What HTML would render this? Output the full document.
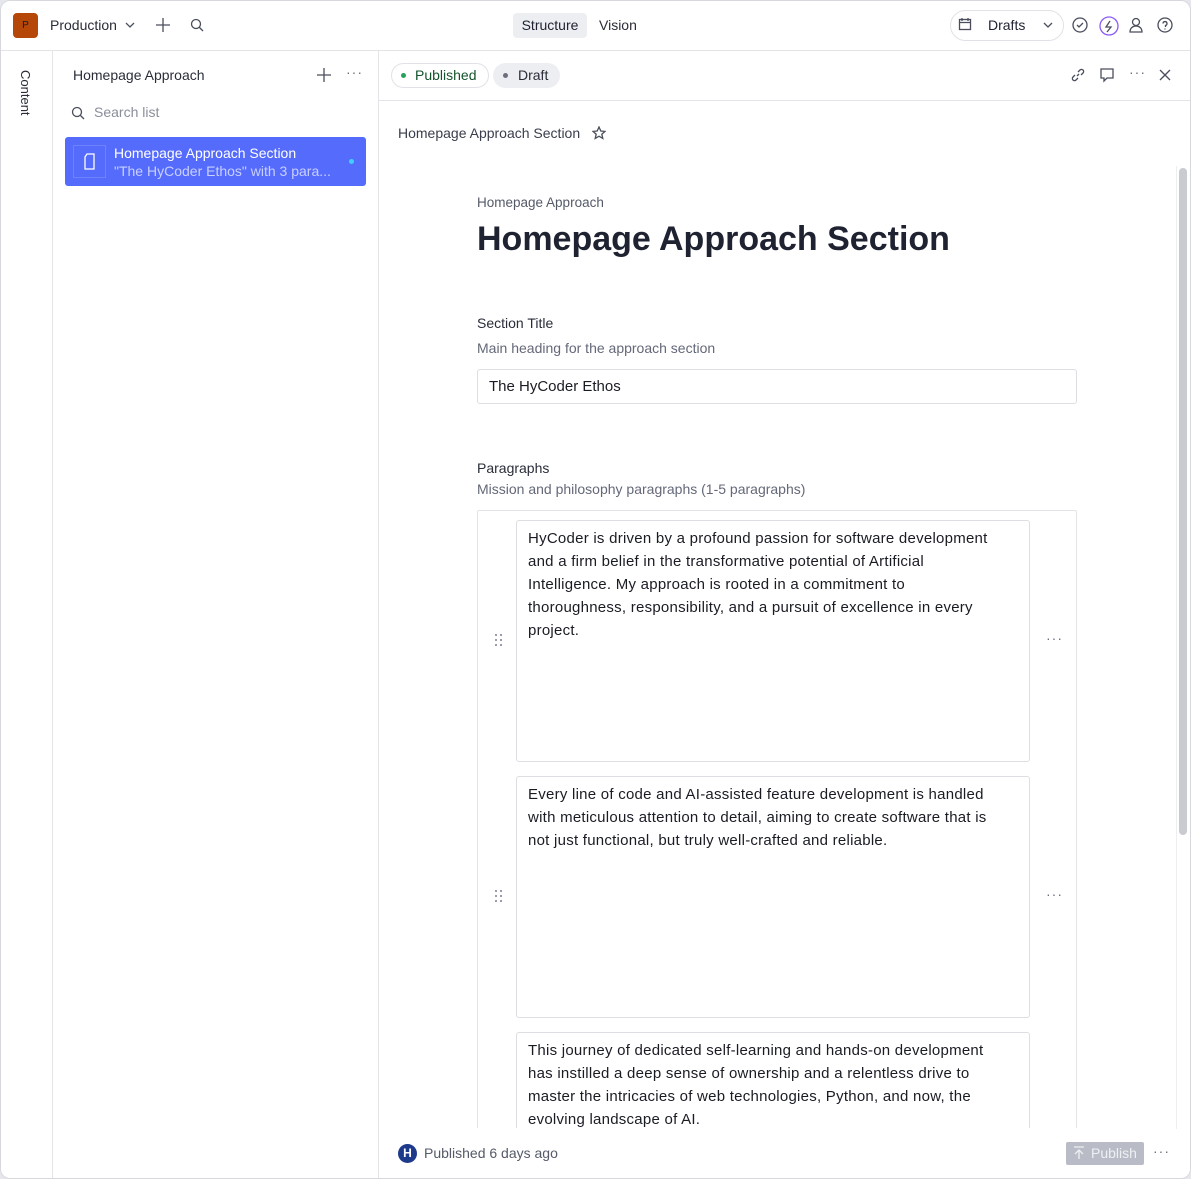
<!DOCTYPE html>
<html><head><style>
*{box-sizing:border-box;margin:0;padding:0}
body{width:1191px;height:1179px;background:#e6e7ec;font-family:"Liberation Sans",sans-serif;position:relative;overflow:hidden;color:#1f2230}
.win{position:absolute;left:0;top:0;width:1191px;height:1179px;background:#fff;border-radius:10px;overflow:hidden}
.frame{position:absolute;left:0;top:0;width:1191px;height:1179px;border:1px solid #d6d8de;border-radius:10px;pointer-events:none}
.a{position:absolute;white-space:nowrap}
.ic{position:absolute;stroke:#4a4e5c;fill:none;stroke-width:1.3}
.ta{position:absolute;left:516px;width:514px;border:1px solid #dcdee3;border-radius:3px;padding:6px 11px;font-size:15px;line-height:23px;color:#1a1c24;background:#fff;letter-spacing:0.25px;white-space:nowrap}
.drag{position:absolute;left:495px;width:8px;height:12px}
.drag i{position:absolute;width:2px;height:2px;background:#7b7f8c;border-radius:1px}
.dots{position:absolute;font-size:14px;color:#6b6f7c;letter-spacing:1px}
</style></head><body><div class="win">
<!-- top bar -->
<div class="a" style="left:13px;top:13px;width:25px;height:25px;background:#b54708;border-radius:4px;color:#1b1b1b;font-size:10px;text-align:center;line-height:25px">P</div>
<div class="a" style="left:50px;top:17px;font-size:14px;color:#2a2d38">Production</div>
<svg class="ic" style="left:124px;top:19px" width="12" height="12"><path d="M2 4l4 4 4-4"/></svg>
<svg class="ic" style="left:155px;top:17px" width="16" height="16"><path d="M8 1v14M1 8h14"/></svg>
<svg class="ic" style="left:190px;top:18px" width="14" height="14"><circle cx="6" cy="6" r="4.5"/><path d="M9.5 9.5l3.5 3.5"/></svg>
<div class="a" style="left:513px;top:13px;width:74px;height:25px;background:#eceef2;border-radius:4px;font-size:14px;text-align:center;line-height:25px;color:#1f2230">Structure</div>
<div class="a" style="left:599px;top:17px;font-size:14px;color:#2a2d38">Vision</div>
<div class="a" style="left:950px;top:10px;width:114px;height:31px;border:1px solid #e0e2e7;border-radius:16px"></div>
<svg class="ic" style="left:958px;top:17px" width="14" height="14"><rect x="1.5" y="2.5" width="11" height="10"/><path d="M1.5 5.5h11M4 1v3M10 1v3"/></svg>
<div class="a" style="left:988px;top:17px;font-size:14px;color:#1f2230">Drafts</div>
<svg class="ic" style="left:1042px;top:19px" width="12" height="12"><path d="M2 4l4 4 4-4"/></svg>
<svg class="ic" style="left:1072px;top:17px" width="16" height="16"><circle cx="8" cy="8" r="7"/><path d="M5 8l2 2 4-4"/></svg>
<svg class="ic" style="left:1099px;top:16px;stroke:#8b5cf6" width="20" height="20"><circle cx="10" cy="10" r="9"/><path d="M11 5l-4 6h5l-4 5" stroke="#4a4e5c"/></svg>
<svg class="ic" style="left:1128px;top:16px" width="18" height="18"><circle cx="8" cy="6" r="3.5"/><path d="M2 16c0-4 3-6 6-6s6 2 6 6z"/></svg>
<svg class="ic" style="left:1157px;top:17px" width="16" height="16"><circle cx="8" cy="8" r="7"/><path d="M6 6.5a2 2 0 1 1 2.5 2v1.5M8 11.5v1"/></svg>
<div class="a" style="left:0;top:50px;width:1191px;height:1px;background:#e2e4e8"></div>
<!-- left strip -->
<div class="a" style="left:52px;top:51px;width:1px;height:1128px;background:#e2e4e8"></div>
<div class="a" style="left:18px;top:70px;font-size:13px;color:#2a2d38;writing-mode:vertical-rl">Content</div>
<!-- list pane -->
<div class="a" style="left:378px;top:51px;width:1px;height:1128px;background:#e2e4e8"></div>
<div class="a" style="left:73px;top:67px;font-size:14px;color:#2a2d38">Homepage Approach</div>
<svg class="ic" style="left:317px;top:68px" width="14" height="14"><path d="M7 0v14M0 7h14"/></svg>
<div class="dots" style="left:346px;top:64px">···</div>
<svg class="ic" style="left:71px;top:106px" width="14" height="14"><circle cx="6" cy="6" r="4.5"/><path d="M9.5 9.5l3.5 3.5"/></svg>
<div class="a" style="left:94px;top:104px;font-size:14px;color:#8a8e9a">Search list</div>
<div class="a" style="left:65px;top:137px;width:301px;height:49px;background:#556bfc;border-radius:3px"></div>
<div class="a" style="left:73px;top:145px;width:33px;height:33px;border:1px solid #6f82fd"></div>
<svg class="ic" style="left:83px;top:153px;stroke:#fff" width="13" height="17"><path d="M4 1h7v15H2V4z"/></svg>
<div class="a" style="left:114px;top:145px;font-size:14px;color:#fff">Homepage Approach Section</div>
<div class="a" style="left:114px;top:163px;font-size:14px;color:#c8d0ff">"The HyCoder Ethos" with 3 para...</div>
<div class="a" style="left:349px;top:159px;width:5px;height:5px;border-radius:50%;background:#3fd0ff"></div>
<!-- doc header -->
<div class="a" style="left:391px;top:63px;width:98px;height:25px;border:1px solid #e0e2e7;border-radius:13px"></div>
<div class="a" style="left:401px;top:73px;width:5px;height:5px;border-radius:50%;background:#22a55a"></div>
<div class="a" style="left:415px;top:67px;font-size:14px;color:#14532d">Published</div>
<div class="a" style="left:493px;top:63px;width:67px;height:25px;background:#eceef2;border-radius:13px"></div>
<div class="a" style="left:503px;top:73px;width:5px;height:5px;border-radius:50%;background:#6b6f7c"></div>
<div class="a" style="left:518px;top:67px;font-size:14px;color:#2a2d38">Draft</div>
<svg class="ic" style="left:1071px;top:68px" width="14" height="14"><path d="M6 8l2-2M4 7l-2 2a2 2 0 0 0 3 3l2-2M10 7l2-2a2 2 0 0 0-3-3L7 4"/></svg>
<svg class="ic" style="left:1099px;top:67px" width="16" height="16"><path d="M2 2h12v9H8l-3 3v-3H2z"/></svg>
<div class="dots" style="left:1129px;top:64px">···</div>
<svg class="ic" style="left:1159px;top:69px" width="12" height="12"><path d="M1 1l10 10M11 1L1 11"/></svg>
<div class="a" style="left:379px;top:100px;width:812px;height:1px;background:#e2e4e8"></div>
<div class="a" style="left:398px;top:125px;font-size:14px;color:#3a3e4c">Homepage Approach Section</div>
<svg class="ic" style="left:592px;top:126px" width="14" height="14"><path d="M7 1l1.8 4 4.2.4-3.2 2.8 1 4.2L7 10.2 3.2 12.4l1-4.2L1 5.4l4.2-.4z"/></svg>
<!-- scrollbar -->
<div class="a" style="left:1176px;top:166px;width:14px;height:963px;border-left:1px solid #eceef0"></div>
<div class="a" style="left:1179px;top:168px;width:8px;height:667px;background:#c9cbd0;border-radius:4px"></div>
<!-- form -->
<div class="a" style="left:477px;top:195px;font-size:13.5px;color:#555a68">Homepage Approach</div>
<div class="a" style="left:477px;top:220px;font-size:34px;font-weight:bold;color:#1f2230">Homepage Approach Section</div>
<div class="a" style="left:477px;top:315px;font-size:14px;color:#2a2d38">Section Title</div>
<div class="a" style="left:477px;top:340px;font-size:14px;color:#646878">Main heading for the approach section</div>
<div class="a" style="left:477px;top:369px;width:600px;height:35px;border:1px solid #dcdee3;border-radius:3px;padding:8px 11px;font-size:15px;color:#1a1c24">The HyCoder Ethos</div>
<div class="a" style="left:477px;top:460px;font-size:14px;color:#2a2d38">Paragraphs</div>
<div class="a" style="left:477px;top:481px;font-size:14px;color:#646878">Mission and philosophy paragraphs (1-5 paragraphs)</div>
<div class="a" style="left:477px;top:510px;width:600px;height:640px;border:1px solid #e2e4e8;border-radius:2px"></div>
<div class="ta" style="top:520px;height:242px">HyCoder is driven by a profound passion for software development<br>and a firm belief in the transformative potential of Artificial<br>Intelligence. My approach is rooted in a commitment to<br>thoroughness, responsibility, and a pursuit of excellence in every<br>project.</div>
<div class="ta" style="top:776px;height:242px">Every line of code and AI-assisted feature development is handled<br>with meticulous attention to detail, aiming to create software that is<br>not just functional, but truly well-crafted and reliable.</div>
<div class="ta" style="top:1032px;height:140px">This journey of dedicated self-learning and hands-on development<br>has instilled a deep sense of ownership and a relentless drive to<br>master the intricacies of web technologies, Python, and now, the<br>evolving landscape of AI.</div>
<div class="drag" style="top:634px"><i style="left:0;top:0"></i><i style="left:5px;top:0"></i><i style="left:0;top:5px"></i><i style="left:5px;top:5px"></i><i style="left:0;top:10px"></i><i style="left:5px;top:10px"></i></div>
<div class="drag" style="top:890px"><i style="left:0;top:0"></i><i style="left:5px;top:0"></i><i style="left:0;top:5px"></i><i style="left:5px;top:5px"></i><i style="left:0;top:10px"></i><i style="left:5px;top:10px"></i></div>
<div class="dots" style="left:1046px;top:630px">···</div>
<div class="dots" style="left:1046px;top:886px">···</div>
<!-- footer -->
<div class="a" style="left:379px;top:1128px;width:797px;height:51px;background:#fff"></div>
<div class="a" style="left:398px;top:1144px;width:19px;height:19px;border-radius:50%;background:#1e3a8a;color:#fff;font-size:12px;font-weight:bold;text-align:center;line-height:19px">H</div>
<div class="a" style="left:424px;top:1145px;font-size:14px;color:#555a68">Published 6 days ago</div>
<div class="a" style="left:1066px;top:1142px;width:78px;height:23px;background:#b9bcc6;border-radius:2px;color:#eef0f4;font-size:14px;line-height:23px;padding-left:25px">Publish</div>
<svg class="ic" style="left:1072px;top:1146px;stroke:#eef0f4" width="14" height="14"><path d="M2 1h10M7 13V4M3 8l4-4 4 4"/></svg>
<div class="dots" style="left:1153px;top:1143px">···</div>
</div><div class="frame"></div></body></html>
